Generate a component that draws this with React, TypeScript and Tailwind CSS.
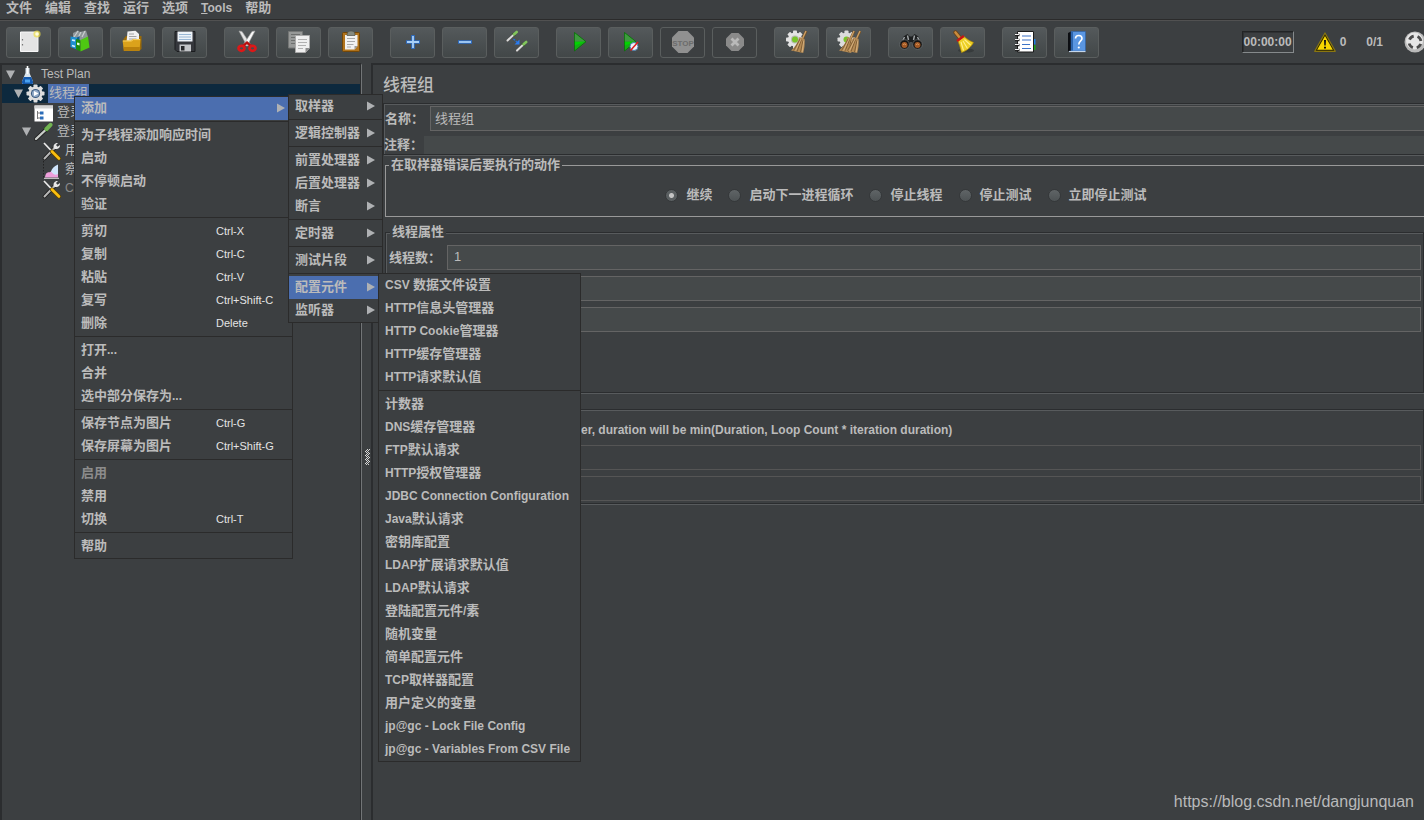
import type { ReactNode } from "react";
import clsx from "clsx";

interface MenuEntry {
  label: string;
  shortcut?: string;
  submenu?: boolean;
  active?: boolean;
  disabled?: boolean;
}

interface TreeNode {
  label: string;
  depth: number;
  icon: ReactNode;
  expanded?: boolean;
  selected?: boolean;
  disabled?: boolean;
}

const contextMenu: MenuEntry[][] = [
  [{ label: "添加", submenu: true, active: true }],
  [{ label: "为子线程添加响应时间" }, { label: "启动" }, { label: "不停顿启动" }, { label: "验证" }],
  [
    { label: "剪切", shortcut: "Ctrl-X" },
    { label: "复制", shortcut: "Ctrl-C" },
    { label: "粘贴", shortcut: "Ctrl-V" },
    { label: "复写", shortcut: "Ctrl+Shift-C" },
    { label: "删除", shortcut: "Delete" },
  ],
  [{ label: "打开..." }, { label: "合并" }, { label: "选中部分保存为..." }],
  [
    { label: "保存节点为图片", shortcut: "Ctrl-G" },
    { label: "保存屏幕为图片", shortcut: "Ctrl+Shift-G" },
  ],
  [{ label: "启用", disabled: true }, { label: "禁用" }, { label: "切换", shortcut: "Ctrl-T" }],
  [{ label: "帮助" }],
];

const addMenu: MenuEntry[][] = [
  [{ label: "取样器", submenu: true }],
  [{ label: "逻辑控制器", submenu: true }],
  [
    { label: "前置处理器", submenu: true },
    { label: "后置处理器", submenu: true },
    { label: "断言", submenu: true },
  ],
  [{ label: "定时器", submenu: true }],
  [{ label: "测试片段", submenu: true }],
  [
    { label: "配置元件", submenu: true, active: true },
    { label: "监听器", submenu: true },
  ],
];

const configMenu: MenuEntry[][] = [
  [
    { label: "CSV 数据文件设置" },
    { label: "HTTP信息头管理器" },
    { label: "HTTP Cookie管理器" },
    { label: "HTTP缓存管理器" },
    { label: "HTTP请求默认值" },
  ],
  [
    { label: "计数器" },
    { label: "DNS缓存管理器" },
    { label: "FTP默认请求" },
    { label: "HTTP授权管理器" },
    { label: "JDBC Connection Configuration" },
    { label: "Java默认请求" },
    { label: "密钥库配置" },
    { label: "LDAP扩展请求默认值" },
    { label: "LDAP默认请求" },
    { label: "登陆配置元件/素" },
    { label: "随机变量" },
    { label: "简单配置元件" },
    { label: "TCP取样器配置" },
    { label: "用户定义的变量" },
    { label: "jp@gc - Lock File Config" },
    { label: "jp@gc - Variables From CSV File" },
  ],
];

const errorActions = ["继续", "启动下一进程循环", "停止线程", "停止测试", "立即停止测试"];

// Latin runs are set one size below the Chinese ones
function Label({ text }: { text: string }) {
  const runs = text.split(/([\u0020-\u007e]+)/).filter(Boolean);
  return (
    <span className="whitespace-pre">
      {runs.map((run, i) => (
        <span key={i} className={/^[\u0020-\u007e]/.test(run) ? "text-[12px]" : "text-[13px]"}>
          {run}
        </span>
      ))}
    </span>
  );
}

function Svg({ size = 24, children }: { size?: number; children: ReactNode }) {
  return (
    <svg width={size} height={size} viewBox={`0 0 ${size} ${size}`} fill="none" aria-hidden="true" className="shrink-0">
      {children}
    </svg>
  );
}

function ToolButton({ title, disabled, children }: { title: string; disabled?: boolean; children: ReactNode }) {
  return (
    <button
      type="button"
      title={title}
      aria-label={title}
      disabled={disabled}
      className={clsx(
        "flex h-[31px] w-[45px] shrink-0 items-center justify-center rounded-[3px] border border-[#5a5e5e]",
        !disabled && "bg-linear-to-b from-[#54595b] to-[#424748]",
      )}
    >
      {children}
    </button>
  );
}

const gearTeeth = [0, 45, 90, 135, 180, 225, 270, 315];

function Gear({ cx, cy, r, fill }: { cx: number; cy: number; r: number; fill: string }) {
  return (
    <g fill={fill}>
      <circle cx={cx} cy={cy} r={r} />
      {gearTeeth.map((a) => (
        <rect
          key={a}
          x={cx - 2}
          y={cy - r - 2}
          width="4"
          height="4"
          rx="0.8"
          transform={`rotate(${a} ${cx} ${cy})`}
        />
      ))}
    </g>
  );
}

function StrawBroom({ dx = 0 }: { dx?: number }) {
  return (
    <g transform={`translate(${dx} 0)`}>
      <path d="M21.2 1 17.5 9" stroke="#6f4f28" strokeWidth="2.6" />
      <path d="M21 1 17.3 9" stroke="#cda066" strokeWidth="1.4" />
      <path d="M14.5 7 19.600 9C20 14 19.400 19 18.200 23L6 20.500C10 17 13 12.500 14.500 7Z" fill="#b58b55" />
      <path d="M15.200 9 8.500 20.600M16.500 9.500 12 21.500M18 10.500 15.500 22" stroke="#75542d" strokeWidth="0.8" />
      <path d="M16 9 10.600 20.600M18.800 10.500 17.200 22" stroke="#e2bf8c" strokeWidth="0.7" />
    </g>
  );
}

function PlayTriangle({ x }: { x: number }) {
  return (
    <g transform={`translate(${x} 0)`}>
      <path d="M.5 2.500 12 11.700.5 21Z" fill="#12b012" stroke="#0a6b0a" strokeWidth="0.8" />
      <path d="M.9 3.400 11 11.600H.9Z" fill="#3f9a3f" />
      <path d="M.9 12H10L.9 15.500Z" fill="#00d400" />
    </g>
  );
}

function Dropper({ x, y }: { x: number; y: number }) {
  return (
    <g transform={`translate(${x} ${y})`}>
      <path d="M1 9.600 7.500 3.400" stroke="#555" strokeWidth="3" strokeLinecap="round" />
      <path d="M1 9.500 7.500 3.400" stroke="#dedede" strokeWidth="1.900" strokeLinecap="round" />
      <path d="M6 2.200 8.800 5" stroke="#355c26" strokeWidth="1.500" />
      <path d="M7.600 3.200 10.200 1" stroke="#82c45c" strokeWidth="2.700" strokeLinecap="round" />
    </g>
  );
}

const toolGroups: { title: string; disabled?: boolean; icon: ReactNode }[][] = [
  [
    {
      title: "新建",
      icon: (
        <Svg>
          <path d="M3.500 2H21V21.500H3.500Z" fill="#e4e4e4" stroke="#f7f7f7" />
          <path d="M5.500 9v1.500M5.500 14v1.500" stroke="#777" strokeWidth="1.200" />
          <circle cx="20" cy="4" r="3.600" fill="#efe04a" opacity="0.700" />
          <circle cx="20" cy="4" r="1.800" fill="#fffde0" />
        </Svg>
      ),
    },
    {
      title: "模板",
      icon: (
        <Svg>
          <path d="M4 3 9 .5 11 2 17 .5 19 7 11 11 4 8Z" fill="#8f9699" />
          <path d="M5 7 9 1M9 8 12 2M13 7 16 1" stroke="#c9ced0" strokeWidth="1.200" />
          <path d="M1.500 6.500 8 7.500V19.500L1.500 17Z" fill="#1d8fd0" />
          <path d="M8 7.500 10.500 6V19L8 19.500Z" fill="#0c5c94" />
          <path d="M3 10 6 10.600M3 15.500 6 16.500" stroke="#d8f0ff" strokeWidth="1.600" />
          <path d="M7 9 11.500 10V21.500L7 19.500Z" fill="#1c8c0c" />
          <path d="M11.500 10 19 6.500 20.500 17.500 11.500 21.500Z" fill="#4ec812" />
          <path d="M8 12.500 10.500 13V15.500L8 14.800Z" fill="#e4ffd8" />
        </Svg>
      ),
    },
    {
      title: "打开",
      icon: (
        <Svg>
          <path d="M2.500 9 5 6H20.500V19L18 21H2.500Z" fill="#9a6a08" />
          <path d="M5.500 12 6.500 1.500 14.500.8 18 4V12Z" fill="#f1f1f1" />
          <path d="M8 4H13M8 6.500H15.500M8 9H15.500" stroke="#9a9a9a" strokeWidth="0.900" />
          <path d="M1.500 10.500H10L12 9H19.500L18.500 20.500H3Z" fill="#dba21b" />
          <path d="M2 11H10.300L12.300 9.600H19" stroke="#ffd869" strokeWidth="0.900" />
          <path d="M2.800 17H18.800L18.500 20.500H3Z" fill="#b9800c" />
        </Svg>
      ),
    },
    {
      title: "保存",
      icon: (
        <Svg>
          <path d="M2 1.500H22V21.500H4L2 19.500Z" fill="#35373c" stroke="#1b1c1f" />
          <path d="M4.500 1.500H19.500V11.500H4.500Z" fill="#eef3f8" />
          <path d="M6 4.500H18M6 7H18M6 9.500H18" stroke="#8fb0d0" strokeWidth="0.900" />
          <path d="M6.500 14.500H18V21.500H6.500Z" fill="#c3c5c8" />
          <path d="M8 16H11.500V20.500H8Z" fill="#27282b" />
        </Svg>
      ),
    },
  ],
  [
    {
      title: "剪切",
      icon: (
        <Svg>
          <path d="M4 1 7 1.500 15.500 14.500 12 16Z" fill="#e4e4e4" stroke="#a5a5a5" strokeWidth="0.600" />
          <path d="M20 1 17 1.500 8.500 14.500 12 16Z" fill="#f8f8f8" stroke="#a5a5a5" strokeWidth="0.600" />
          <path d="M8 16 12 12.500 16 16" stroke="#b50f0f" strokeWidth="2.400" />
          <ellipse cx="6.500" cy="18.300" rx="3" ry="2.500" stroke="#dc1818" strokeWidth="2.700" />
          <ellipse cx="17.500" cy="18.300" rx="3" ry="2.500" stroke="#dc1818" strokeWidth="2.700" />
        </Svg>
      ),
    },
    {
      title: "复制",
      icon: (
        <Svg>
          <path d="M1.500 1.500H15.500V18H1.500Z" fill="#979998" stroke="#757776" />
          <path d="M4 4.500H13M4 7.500H13M4 10.500H9M4 13.500H9" stroke="#6d6f6e" />
          <path d="M8.500 5.500H22.500V18L18.500 22.500H8.500Z" fill="#efefef" stroke="#a9a9a9" />
          <path d="M22.500 18H18.500V22.500Z" fill="#8d8d8d" />
          <path d="M11 9.500H20M11 12.500H20M11 15.500H19M11 18.500H16" stroke="#b0b0b0" />
        </Svg>
      ),
    },
    {
      title: "粘贴",
      icon: (
        <Svg>
          <rect x="3.500" y="2.500" width="17" height="19" rx="1" fill="#b0731c" stroke="#734708" />
          <path d="M6 5H18.500V16L15.500 19.500H6Z" fill="#f1f1f1" />
          <path d="M18.500 16H15.500V19.500Z" fill="#999" />
          <path d="M8 8.500H16M8 11.500H16M8 14.500H14.500M8 17H12" stroke="#a9a9a9" />
          <path d="M8 5.500C8 1.500 10 1 12 1S16 1.500 16 5.500Z" fill="#858a80" stroke="#4c4f48" strokeWidth="0.700" />
        </Svg>
      ),
    },
  ],
  [
    {
      title: "全部展开",
      icon: (
        <Svg>
          <path d="M12 5V19M5 12H19" stroke="#2f6cc0" strokeWidth="3.600" />
          <path d="M12 6V18M6 12H18" stroke="#a9d0f7" strokeWidth="1.800" />
        </Svg>
      ),
    },
    {
      title: "全部折叠",
      icon: (
        <Svg>
          <path d="M5 12H19" stroke="#2f6cc0" strokeWidth="3.600" />
          <path d="M6 12H18" stroke="#a9d0f7" strokeWidth="1.800" />
        </Svg>
      ),
    },
    {
      title: "切换",
      icon: (
        <Svg>
          <Dropper x={1.500} y={1} />
          <Dropper x={11} y={11} />
          <path d="M8.500 9 13 13" stroke="#1f6fe0" strokeWidth="1.300" strokeDasharray="2 1" />
          <path d="M14.500 9.500V14.500H9.500Z" fill="#2a7cf0" />
        </Svg>
      ),
    },
  ],
  [
    { title: "启动", icon: <Svg><PlayTriangle x={7} /></Svg> },
    {
      title: "不停顿启动",
      icon: (
        <Svg>
          <PlayTriangle x={5} />
          <circle cx="15" cy="16.500" r="4" fill="#eaf3fb" stroke="#4d7fae" />
          <path d="M11.500 20.500 19 12" stroke="#e01b1b" strokeWidth="1.500" />
        </Svg>
      ),
    },
    {
      title: "停止",
      disabled: true,
      icon: (
        <Svg>
          <path d="M7.500 1H16.500L23 7.500V16.500L16.500 23H7.500L1 16.500V7.500Z" fill="#909090" />
          <text
            x="12"
            y="15.500"
            textAnchor="middle"
            fill="#6c6c6c"
            className="font-['Liberation_Sans_Narrow','Liberation_Sans',sans-serif] text-[8px] font-bold"
          >
            STOP
          </text>
        </Svg>
      ),
    },
    {
      title: "关闭",
      disabled: true,
      icon: (
        <Svg>
          <path d="M8.500 3H15.500L21 8.500V15.500L15.500 21H8.500L3 15.500V8.500Z" fill="#8a8a8a" />
          <path d="M8.500 8.500 15.500 15.500M15.500 8.500 8.500 15.500" stroke="#b9b9b9" strokeWidth="2.800" />
        </Svg>
      ),
    },
  ],
  [
    {
      title: "清除",
      icon: (
        <Svg>
          <Gear cx={10} cy={9.500} r={7} fill="#e3e3e3" />
          <circle cx="10" cy="9.500" r="4" fill="#b8bcb4" />
          <circle cx="10" cy="9.500" r="3" fill="#79c42a" />
          <StrawBroom />
        </Svg>
      ),
    },
    {
      title: "清除全部",
      icon: (
        <Svg>
          <Gear cx={9.500} cy={9.500} r={7} fill="#dcdcdc" />
          <circle cx="9.500" cy="9.500" r="3" fill="#79c42a" />
          <StrawBroom dx={-4} />
          <StrawBroom dx={2} />
        </Svg>
      ),
    },
  ],
  [
    {
      title: "查找",
      icon: (
        <Svg>
          <path d="M4.500 6.500 8.500 4 11 6.500H13L15.500 4 19.500 6.500 23 14.500H14L13 12H11L10 14.500H1Z" fill="#1d1f20" />
          <path d="M5.500 7 3 12M8.500 5.500 9.500 10M18.500 7 21 12M15.500 5.500 14.500 10" stroke="#a2a7a9" strokeWidth="1.400" />
          <circle cx="5.500" cy="14.500" r="4.800" fill="#141414" stroke="#6a6e70" strokeWidth="0.800" />
          <circle cx="18.500" cy="14.500" r="4.800" fill="#141414" stroke="#6a6e70" strokeWidth="0.800" />
          <circle cx="5.500" cy="15" r="3" fill="#a35a27" />
          <circle cx="18.500" cy="15" r="3" fill="#a35a27" />
          <path d="M4 15C5 13.500 6 13.500 7 15M17 15C18 13.500 19 13.500 20 15" stroke="#dc9a5c" />
        </Svg>
      ),
    },
    {
      title: "重置搜索",
      icon: (
        <Svg>
          <ellipse cx="15" cy="20.500" rx="8" ry="2" fill="#282b2c" opacity="0.500" />
          <path d="M4.500 2.500 9 8" stroke="#6c4212" strokeWidth="4.200" strokeLinecap="round" />
          <path d="M4.500 2.500 9 8" stroke="#c98b3e" strokeWidth="2.600" strokeLinecap="round" />
          <path d="M7 11 13 6.500C16 9 19 11 22.500 12.500 20 17 16.500 20.500 10.500 22.500 9.500 18.500 8.500 15 7 11Z" fill="#edcf24" stroke="#a98508" strokeWidth="0.700" />
          <path d="M10 12 12.500 20.500M12 11 16.500 18.500M13.500 9.500 19.500 15" stroke="#fff08a" strokeWidth="1.100" />
          <path d="M6 11 12.800 6" stroke="#c81414" strokeWidth="2.200" />
        </Svg>
      ),
    },
  ],
  [
    {
      title: "函数助手",
      icon: (
        <Svg>
          <path d="M20 9H22.500V14.500H20Z" fill="#1f7fe0" />
          <path d="M20 15H22.500V20H20Z" fill="#19a319" />
          <path d="M4.500 1.500H20.500V22H4.500Z" fill="#fff" stroke="#1c1c1c" />
          <path d="M9 6H18M9 10H18M9 14.500H17M9 18.500H18" stroke="#3c73c8" strokeWidth="1.200" />
          <path d="M2 5H6.500M2 10H6.500M2 15H6.500M2 20H6.500" stroke="#222" strokeWidth="2.600" />
          <path d="M2 4.500H6M2 9.500H6M2 14.500H6M2 19.500H6" stroke="#f2f2f2" strokeWidth="1.200" />
        </Svg>
      ),
    },
    {
      title: "帮助",
      icon: (
        <Svg>
          <path d="M3 3 6 1.500V22L3 21Z" fill="#0c0e12" />
          <path d="M6 1.500H20.500V21H6Z" fill="#5a96e2" stroke="#2a5fa8" strokeWidth="0.600" />
          <path d="M4 21.500H20.500" stroke="#c5d6ea" strokeWidth="1.200" />
          <path d="M6.300 2H7.800V20.500H6.300Z" fill="#2358a0" />
          <path d="M10.500 8.500C10.500 4.500 17 4.500 17 8.500 17 11 13.800 10.800 13.800 14.500" stroke="#fff" strokeWidth="1.600" />
          <circle cx="13.800" cy="17.500" r="1.100" fill="#fff" />
        </Svg>
      ),
    },
  ],
];

const toolsIcon = (
  <Svg size={20}>
    <path d="M2.500 17.500 13 6.500" stroke="#1b1b1b" strokeWidth="3.600" strokeLinecap="round" />
    <path d="M2.500 17.500 13 6.500" stroke="#b7b7b7" strokeWidth="2" strokeLinecap="round" />
    <path d="M12 7.500C10.500 4.500 13 1.500 16 2L14 4 15.500 5.700 18 4C18.500 7 15.500 9 12 7.500Z" fill="#e8e8e8" />
    <path d="M2 2 10 10.500" stroke="#ececec" strokeWidth="1.700" />
    <path d="M10 10.500 17 17.500" stroke="#5c4300" strokeWidth="4" strokeLinecap="round" />
    <path d="M10 10.500 17 17.500" stroke="#fbbf10" strokeWidth="2.600" strokeLinecap="round" />
  </Svg>
);

const treeNodes: TreeNode[] = [
  {
    label: "Test Plan",
    depth: 0,
    expanded: true,
    icon: (
      <Svg size={20}>
        <path d="M7.500 3H11.500V8L15 16.500C15.300 18.500 14.500 19 13.500 19H5.500C4.500 19 3.700 18.500 4 16.500L7.500 8Z" fill="#d9e4ee" />
        <path d="M5.800 12H13.200L15 16.500C15.300 18.500 14.500 19 13.500 19H5.500C4.500 19 3.700 18.500 4 16.500Z" fill="#1559ad" />
        <path d="M7 14.500H12V17.500H7Z" fill="#4aa3f0" />
        <path d="M9.500 1V9" stroke="#fff" strokeWidth="1.600" />
      </Svg>
    ),
  },
  {
    label: "线程组",
    depth: 1,
    expanded: true,
    selected: true,
    icon: (
      <Svg size={20}>
        <Gear cx={9.500} cy={9.500} r={7} fill="#dedede" />
        <circle cx="9.500" cy="9.500" r="4.600" fill="#3a5a80" />
        <circle cx="9.500" cy="9.500" r="3.500" fill="#93abc8" />
        <path d="M8 7 12.500 9.500 8 12Z" fill="#fff" />
      </Svg>
    ),
  },
  {
    label: "登录",
    depth: 2,
    icon: (
      <Svg size={20}>
        <path d="M.5 2.500H19V18.500H.5Z" fill="#fff" />
        <path d="M.5 2.500H19V5.500H.5Z" fill="#d4d4d4" />
        <path d="M3.500 8V16M3.500 10H6M3.500 15H6" stroke="#777" />
        <path d="M6 8.500H9.500V11.500H6ZM6 13.500H9.500V16.500H6Z" fill="#2b6cb8" />
      </Svg>
    ),
  },
  {
    label: "登录",
    depth: 2,
    expanded: true,
    icon: (
      <Svg size={20}>
        <path d="M2 17 11.500 8" stroke="#222" strokeWidth="4" strokeLinecap="round" />
        <path d="M2 17 11.500 8" stroke="#c9cdc9" strokeWidth="2.400" strokeLinecap="round" />
        <path d="M10 5.500 14 9.500" stroke="#2e5522" strokeWidth="2" />
        <path d="M12.500 7 16.500 2.800" stroke="#72b552" strokeWidth="4" strokeLinecap="round" />
      </Svg>
    ),
  },
  { label: "用", depth: 3, icon: toolsIcon },
  {
    label: "察",
    depth: 3,
    icon: (
      <Svg size={20}>
        <path d="M1.500 1V18.500" stroke="#222" strokeDasharray="1.500 1.500" />
        <path d="M3 17C4.500 10 7 13.500 9 11.500S12.500 15 16 14V17.500H3Z" fill="#ee9fdb" />
        <path d="M9 11.500C11 6.500 13.500 6 16 4.500V14C13.500 15.500 11 14.500 9 11.500Z" fill="#cfe4fa" />
        <path d="M2 18.300H17" stroke="#dcdcdc" />
      </Svg>
    ),
  },
  { label: "C", depth: 3, icon: toolsIcon, disabled: true },
];

const depthPadding = ["pl-1", "pl-3", "pl-5", "pl-7"];

function TreeRow({ node }: { node: TreeNode }) {
  return (
    <li className={clsx("flex h-[19px] items-center", depthPadding[node.depth], node.selected && "bg-[#0d293e]")}>
      <span className="flex w-3 shrink-0">
        {node.expanded && (
          <svg width="9" height="9" viewBox="0 0 9 9" aria-hidden="true">
            <path d="M0 .5H9L4.500 9Z" fill="#afb1b3" />
          </svg>
        )}
      </span>
      {node.icon}
      <span
        className={clsx(
          "ml-0.5 flex h-[19px] items-center pr-px pb-0.5 pl-px",
          node.selected && "bg-[#4b6eaf]",
          node.disabled && "text-[#8a8a8a]",
        )}
      >
        <Label text={node.label} />
      </span>
    </li>
  );
}

function PopupMenu({ sections, className }: { sections: MenuEntry[][]; className: string }) {
  return (
    <div role="menu" className={clsx("absolute border border-[#2b2b2b] bg-[#3c3f41] font-bold", className)}>
      {sections.map((section, i) => (
        <div key={i}>
          {i > 0 && <div role="separator" className="mt-px mb-0.5 h-px bg-[#2b2b2b]" />}
          {section.map((entry) => (
            <button
              key={entry.label}
              type="button"
              role="menuitem"
              disabled={entry.disabled}
              className={clsx(
                "flex h-[23px] w-full items-center pr-[7px] pb-0.5 pl-1.5 text-left",
                entry.active && "bg-[#4b6eaf]",
                entry.disabled && "text-[#8c8c8c]",
              )}
            >
              <span className={clsx(entry.shortcut ? "w-[135px]" : "grow")}>
                <Label text={entry.label} />
              </span>
              {entry.shortcut && <span className="text-[11px] font-normal text-[#e4e4e4]">{entry.shortcut}</span>}
              {entry.submenu && (
                <svg width="8" height="10" viewBox="0 0 8 10" aria-hidden="true">
                  <path d="M0 .5 8 5 0 9.500Z" fill="#afb1b3" />
                </svg>
              )}
            </button>
          ))}
        </div>
      ))}
    </div>
  );
}

const etched = "border border-[#2b2d2f] shadow-[inset_1px_1px_0_#585b5d,1px_1px_0_#585b5d]";
const field = "h-[25px] min-w-0 grow border border-[#646464] bg-[#45494a] px-1 pb-0.5 text-[13px]";

export default function App() {
  return (
    <div className="relative flex min-h-screen flex-col overflow-hidden bg-[#3c3f41] font-['Liberation_Sans','Noto_Sans_CJK_SC',sans-serif] leading-5 text-[#bbbbbb]">
      <nav className="flex h-[21px] items-start gap-[13px] border-b border-[#515151] pl-1.5 font-bold shadow-[inset_0_-1px_0_#2b2b2b]">
        {["文件", "编辑", "查找", "运行", "选项"].map((item) => (
          <button key={item} type="button" className="h-4 text-[13px] leading-4">
            {item}
          </button>
        ))}
        <button type="button" className="h-4 text-[12px] leading-4">
          <span className="underline">T</span>ools
        </button>
        <button type="button" className="h-4 text-[13px] leading-4">
          帮助
        </button>
      </nav>

      <div className="flex h-[42px] items-center pl-1.5">
        <div role="toolbar" className="flex gap-[17px]">
          {toolGroups.map((group, i) => (
            <div key={i} className="flex gap-[7px]">
              {group.map((tool) => (
                <ToolButton key={tool.title} title={tool.title} disabled={tool.disabled}>
                  {tool.icon}
                </ToolButton>
              ))}
            </div>
          ))}
        </div>
        <div className="-mr-0.5 ml-auto flex shrink-0 items-center text-[12px] font-bold">
          <span className="border border-t-[#222425] border-r-[#868a8c] border-b-[#868a8c] border-l-[#222425] px-px shadow-[inset_1px_1px_0_#2f3133]">
            00:00:00
          </span>
          <span className="ml-5 flex items-center gap-1">
            <svg width="22" height="20" viewBox="0 0 22 20" aria-hidden="true">
              <path d="M11 1 21.300 19.300H.7Z" fill="#2a2400" stroke="#8a7610" strokeWidth="1.200" strokeLinejoin="round" />
              <path d="M11 4 18.800 17.800H3.200Z" fill="#f7d500" />
              <path d="M10 8H12L11.700 13.500H10.300ZM10 14.800H12V16.600H10Z" fill="#111" />
            </svg>
            0
          </span>
          <span className="ml-5">0/1</span>
          <svg width="22" height="22" viewBox="0 0 22 22" className="ml-[21px]" aria-hidden="true">
            <circle cx="11" cy="11" r="10.500" fill="#b9b9b9" />
            <circle cx="10.500" cy="10" r="8.500" fill="#e6e6e6" />
            <circle cx="11" cy="11" r="6" fill="none" stroke="#4b4b4b" strokeWidth="2.800" strokeDasharray="5.400 4" strokeDashoffset="-2" />
          </svg>
        </div>
      </div>

      <div className="flex grow">
        <div className="w-[362px] shrink-0 border-t-2 border-r border-l-2 border-t-[#2b2d2f] border-r-[#727577] border-l-[#2b2d2f] shadow-[inset_-1px_0_0_#2b2d2f]">
          <ul className="pr-px">
            {treeNodes.map((node, i) => (
              <TreeRow key={i} node={node} />
            ))}
          </ul>
        </div>

        <div className="flex w-[9px] shrink-0 items-center justify-center">
          <svg width="5" height="16" viewBox="0 0 5 16" aria-hidden="true" className="mt-[30px] ml-0.5">
            {[0, 4, 8, 12].map((y) => (
              <path
                key={y}
                d={`M2 ${y}h1v1h-1zM4 ${y}h1v1h-1zM1 ${y + 1}h1v1h-1zM3 ${y + 1}h1v1h-1zM0 ${y + 2}h1v1h-1zM2 ${y + 2}h1v1h-1zM1 ${y + 3}h1v1h-1zM3 ${y + 3}h1v1h-1z`}
                fill="#d5d5d5"
              />
            ))}
          </svg>
        </div>

        <main className="min-w-0 grow border-t-2 border-l-2 border-[#2b2d2f] pl-2.5">
          <h1 className="h-[38px] text-[17px] leading-[42px] font-medium">线程组</h1>

          <div className={clsx(etched, "border-r-0 pt-0.5")}>
            <div className="flex items-center">
              <label htmlFor="name" className="w-[46px] shrink-0 pl-px text-[13px] font-bold">
                名称：
              </label>
              <input id="name" type="text" defaultValue="线程组" className={clsx(field, "border-r-0")} />
            </div>
            <div className="mt-[5px] flex h-[18px] items-center">
              <label htmlFor="comment" className="w-10 shrink-0 text-[13px] font-bold">
                注释：
              </label>
              <input id="comment" type="text" className="h-[18px] min-w-0 grow bg-[#45494a] px-1 text-[13px]" />
            </div>
          </div>

          <fieldset className="ml-0.5 min-w-0 border border-r-0 border-[#999999] font-bold">
            <legend className="ml-[3px] h-[21px] px-0.5 text-[13px]">在取样器错误后要执行的动作</legend>
            <div className="flex h-10 items-center justify-center gap-4 pb-0.5 pl-0.5">
              {errorActions.map((action, i) => (
                <label key={action} className="flex items-center gap-2 text-[13px]">
                  <input
                    type="radio"
                    name="onError"
                    defaultChecked={i === 0}
                    className="size-[13px] appearance-none rounded-full border border-[#35383a] bg-linear-to-b from-[#5f6466] to-[#4e5355] checked:bg-[radial-gradient(circle,#c4c4c4_2px,#5a5f61_3px)]"
                  />
                  {action}
                </label>
              ))}
            </div>
          </fieldset>

          <fieldset className={clsx(etched, "mt-[5px] ml-0.5 min-w-0 pr-0.5 pb-15 pl-[3px]")}>
            <legend className="ml-px h-[21px] bg-[#3c3f41] px-0.5 text-[13px] font-bold">线程属性</legend>
            <div className="flex flex-col gap-1.5 pt-0.5">
              <div className="flex items-center">
                <label htmlFor="threads" className="w-[58px] shrink-0 text-[13px] font-bold">
                  线程数：
                </label>
                <input id="threads" type="text" defaultValue="1" className={clsx(field, "pl-1.5")} />
              </div>
              <div className="flex pl-28">
                <input type="text" aria-label="Ramp-Up" className={field} />
              </div>
              <div className="flex pl-28">
                <input type="text" aria-label="循环次数" className={field} />
              </div>
            </div>
          </fieldset>

          <section className={clsx(etched, "mt-4 ml-0.5 pt-2.5 pr-0.5 pb-0.5 pl-4")}>
            <p className="mb-[5px] h-5 truncate pl-[179px] text-[12px] font-bold">
              er, duration will be min(Duration, Loop Count * iteration duration)
            </p>
            <div className="flex flex-col gap-1.5 pl-24">
              <input type="text" disabled aria-label="持续时间" className="h-[25px] border border-[#555555] bg-[#3c3f41]" />
              <input type="text" disabled aria-label="启动延迟" className="h-[25px] border border-[#555555] bg-[#3c3f41]" />
            </div>
          </section>
        </main>
      </div>

      <PopupMenu sections={contextMenu} className="top-24 left-[74px] w-[219px]" />
      <PopupMenu sections={addMenu} className="top-[94px] left-72 w-[95px]" />
      <PopupMenu sections={configMenu} className="top-[273px] left-[378px] w-[203px]" />

      <a
        href="https://blog.csdn.net/dangjunquan"
        className="absolute right-2.5 bottom-2 text-[16px] leading-5 text-[#b8b9ba]"
      >
        https://blog.csdn.net/dangjunquan
      </a>
    </div>
  );
}
